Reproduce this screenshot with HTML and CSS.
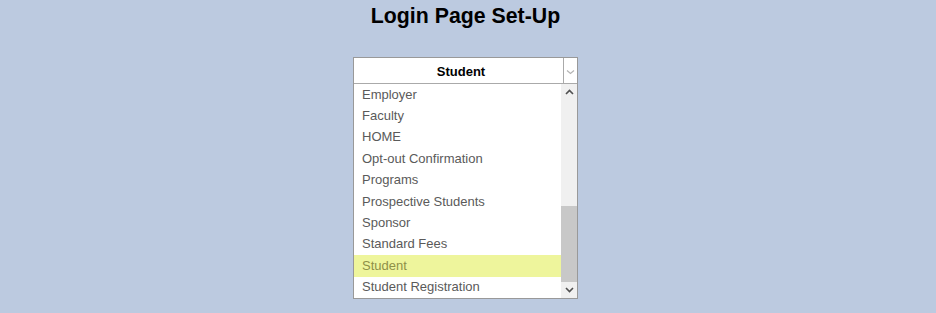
FILE: index.html
```html
<!DOCTYPE html>
<html lang="en">
<head>
  <meta charset="UTF-8" />
  <title>Login Page Set-Up</title>
  <link rel="stylesheet" href="styles.css">
</head>
<body>
  <div class="page">
    <h1 class="title">Login Page Set-Up</h1>

    <div class="picker">
      <div class="picker-head">
        <span class="picker-value">Student</span>
        <span class="picker-btn">
          <svg width="9" height="6" viewBox="0 0 9 6"><path d="M1 1.5 L4.5 4.5 L8 1.5" fill="none" stroke="#b4b4b4" stroke-width="1.2"/></svg>
        </span>
      </div>
      <div class="picker-body">
        <ul class="picker-list">
          <li>Employer</li>
          <li>Faculty</li>
          <li>HOME</li>
          <li>Opt-out Confirmation</li>
          <li>Programs</li>
          <li>Prospective Students</li>
          <li>Sponsor</li>
          <li>Standard Fees</li>
          <li class="selected">Student</li>
          <li>Student Registration</li>
        </ul>
        <div class="scrollbar">
          <div class="sb-arrow">
            <svg width="9" height="6" viewBox="0 0 9 6"><path d="M1 5 L4.5 1.5 L8 5" fill="none" stroke="#505050" stroke-width="1.6"/></svg>
          </div>
          <div class="sb-track"><div class="sb-thumb"></div></div>
          <div class="sb-arrow">
            <svg width="9" height="6" viewBox="0 0 9 6"><path d="M1 1 L4.5 4.5 L8 1" fill="none" stroke="#505050" stroke-width="1.6"/></svg>
          </div>
        </div>
      </div>
    </div>
  </div>
</body>
</html>
```

FILE: styles.css
```css
body {
  margin: 0;
  background-color: #bccae0;
  font-family: "Liberation Sans", Arial, sans-serif;
}
.page {
  display: flex;
  flex-direction: column;
  align-items: center;
  padding-right: 5px;
}
.title {
  margin: 3px 0 28px;
  font-size: 21.3px;
  line-height: 26px;
  font-weight: bold;
  color: #000;
}
.picker {
  width: 225px;
  box-sizing: border-box;
  border: 1px solid #999;
  background: #fff;
}
.picker-head {
  display: flex;
  height: 25px;
  border-bottom: 1px solid #aaa;
}
.picker-value {
  flex: 1;
  text-align: center;
  padding: 1px 0 0 5px;
  font-size: 13px;
  font-weight: bold;
  line-height: 25px;
  color: #000;
}
.picker-btn {
  width: 13px;
  border-left: 1px solid #aaa;
  display: flex;
  align-items: center;
  justify-content: center;
  padding-top: 2px;
}
.picker-body {
  display: flex;
  height: 214px;
}
.picker-list {
  flex: 1;
  list-style: none;
  margin: 0;
  padding: 0;
}
.picker-list li {
  height: 21.4px;
  box-sizing: border-box;
  padding: 0.7px 0 0.7px 8px;
  font-size: 13px;
  line-height: 20px;
  color: #5a5a5a;
}
.picker-list li.selected {
  background: #eef59c;
  color: #8e9048;
}
.scrollbar {
  width: 16px;
  background: #f0f0f0;
  display: flex;
  flex-direction: column;
}
.sb-arrow {
  height: 16px;
  display: flex;
  align-items: center;
  justify-content: center;
}
.sb-track {
  flex: 1;
  display: flex;
  flex-direction: column;
  justify-content: flex-end;
}
.sb-thumb {
  height: 76px;
  background: #c8c8c8;
}
```
